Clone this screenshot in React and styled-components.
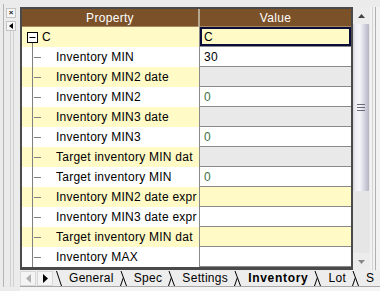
import React from 'react';
import styled, { createGlobalStyle } from 'styled-components';

const GlobalStyle = createGlobalStyle`
  html, body { margin: 0; padding: 0; background: #ebebeb; }
  body { font-family: "Liberation Sans", Arial, sans-serif; }
`;

const Window = styled.div`
  width: 380px;
  height: 291px;
  background: #ebebeb;
  display: flex;
  overflow: hidden;
`;

const LeftStrip = styled.div`
  width: 20px;
  flex: none;
  display: flex;
  flex-direction: column;
  align-items: flex-start;
  padding: 8px 0 0 6px;
  box-sizing: border-box;
  gap: 3px;
  background:
    linear-gradient(#b4b4b4, #b4b4b4) 3px 4px / 1px 283px no-repeat,
    linear-gradient(#d0d0d0, #d0d0d0) 10px 30px / 1px 257px no-repeat,
    linear-gradient(#d0d0d0, #d0d0d0) 13px 30px / 1px 257px no-repeat,
    #ebebeb;
`;

const MiniButton = styled.div`
  width: 8px;
  height: 8px;
  background: #f6f6f6;
  border: 1px solid #c4c4c4;
  display: flex;
  align-items: center;
  justify-content: center;
  font-size: 8px;
  line-height: 1;
  font-weight: bold;
  color: #222;
`;

const Main = styled.div`
  flex: 1;
  display: flex;
  flex-direction: column;
  padding-top: 7px;
`;

const Body = styled.div`
  display: flex;
  height: 263px;
`;

const Grid = styled.div`
  width: 333px;
  box-sizing: border-box;
  border-style: solid;
  border-color: #4a4a4a;
  border-width: 2px 2px 3px 2px;
  background: #fff;
  display: flex;
  flex-direction: column;
`;

const HeaderRow = styled.div`
  display: flex;
  height: 18px;
  background: #7b5129;
  color: #fff;
  font-size: 12px;
  letter-spacing: 0.3px;
  box-shadow: inset 0 -1px 0 #a88860;
`;

const HeaderCell = styled.div`
  width: ${p => p.$w}px;
  flex: none;
  display: flex;
  align-items: center;
  justify-content: center;
  box-sizing: border-box;
  border-right: ${p => (p.$last ? 'none' : '2px solid #b8a890')};
`;

const Row = styled.div`
  display: flex;
  height: 20px;
  box-sizing: border-box;
  border-bottom: 1px solid #8a8a8a;
`;

const PropCell = styled.div`
  width: 178px;
  flex: none;
  display: flex;
  align-items: center;
  box-sizing: border-box;
  border-right: 1px solid #8a8a8a;
  background: ${p => (p.$yellow ? '#fffac6' : '#ffffff')};
  font-size: 12px;
  letter-spacing: 0.25px;
  color: #000;
  white-space: nowrap;
  overflow: hidden;
  margin-bottom: -1px;
`;

const Tree = styled.svg`
  flex: none;
  align-self: stretch;
  height: 20px;
`;

const ValueCell = styled.div`
  width: 151px;
  flex: none;
  display: flex;
  align-items: center;
  box-sizing: border-box;
  padding-left: 4px;
  font-size: 12px;
  letter-spacing: 0.25px;
  color: ${p => (p.$green ? '#3c7040' : '#000')};
  background: ${p =>
    p.$bg === 'yellow' ? '#fffac6' : p.$bg === 'gray' ? '#e9e9e9' : '#ffffff'};
  box-shadow: ${p => (p.$selected ? 'inset 0 0 0 2px #0c0c3a' : 'none')};
`;

const Scrollbar = styled.div`
  width: 17px;
  flex: none;
  display: flex;
  flex-direction: column;
  background: #e6e6e6;
`;

const ScrollButton = styled.div`
  height: 17px;
  flex: none;
  display: flex;
  align-items: center;
  justify-content: center;
  background: #ececec;
`;

const Thumb = styled.div`
  height: 167px;
  flex: none;
  margin: 0 1px 0 0;
  border-radius: 1px;
  background: linear-gradient(to right, #d4d4d8 0%, #ececf2 15%, #f6f6fa 40%, #d6d6e2 70%, #b4b4c4 100%);
  display: flex;
  align-items: center;
  justify-content: center;
`;

const Track = styled.div`
  flex: 1;
  background: #e6e6e6;
`;

const RightEdge = styled.div`
  flex: 1;
  background:
    linear-gradient(#d4d4d4, #d4d4d4) 2px 0 / 1px 100% no-repeat,
    linear-gradient(#b0b0b0, #b0b0b0) 5px 0 / 1px 100% no-repeat,
    #f2f2f2;
`;

const TabBar = styled.div`
  height: 17px;
  display: flex;
  align-items: center;
  background: #ededed;
  font-size: 12px;
  white-space: nowrap;
  overflow: hidden;
`;

const ArrowButton = styled.div`
  width: 16px;
  height: 15px;
  flex: none;
  margin-right: 1px;
  display: flex;
  align-items: center;
  justify-content: center;
  background: #f4f4f4;
  box-shadow: inset 0 0 0 1px #d8d8d8;
`;

const Tab = styled.div`
  flex: none;
  padding: 0 5px;
  font-weight: ${p => (p.$active ? 'bold' : 'normal')};
  letter-spacing: ${p => (p.$active ? '0.7px' : '0.3px')};
  color: #000;
  line-height: 17px;
`;

const Sep = styled.svg`
  flex: none;
`;

const Footer = styled.div`
  height: 4px;
  border-top: 1px solid #a8a8a8;
  background: #f4f4f4;
`;

const rows = [
  { label: 'C', value: 'C', root: true, y: true, v: 'yellow', selected: true },
  { label: 'Inventory MIN', value: '30', y: false, v: 'white' },
  { label: 'Inventory MIN2 date', y: true, v: 'gray' },
  { label: 'Inventory MIN2', value: '0', green: true, y: false, v: 'white' },
  { label: 'Inventory MIN3 date', y: true, v: 'gray' },
  { label: 'Inventory MIN3', value: '0', green: true, y: false, v: 'white' },
  { label: 'Target inventory MIN dat', y: true, v: 'gray' },
  { label: 'Target inventory MIN', value: '0', green: true, y: false, v: 'white' },
  { label: 'Inventory MIN2 date expr', y: true, v: 'yellow' },
  { label: 'Inventory MIN3 date expr', y: false, v: 'white' },
  { label: 'Target inventory MIN dat', y: true, v: 'yellow' },
  { label: 'Inventory MAX', y: false, v: 'white' },
];

const tabs = ['General', 'Spec', 'Settings', 'Inventory', 'Lot', 'S'];

function TreeLines({ root }) {
  if (root) {
    return (
      <Tree width="20" height="20" viewBox="0 0 20 20">
        <rect x="5.5" y="5.5" width="10" height="10" fill="#fff" stroke="#000" />
        <line x1="7.5" y1="10.5" x2="13.5" y2="10.5" stroke="#000" />
        <line x1="10.5" y1="16" x2="10.5" y2="20" stroke="#808080" />
      </Tree>
    );
  }
  return (
    <Tree width="34" height="20" viewBox="0 0 34 20">
      <line x1="10.5" y1="0" x2="10.5" y2="20" stroke="#808080" />
      <line x1="12" y1="10.5" x2="19" y2="10.5" stroke="#808080" />
    </Tree>
  );
}

function TabSep({ first }) {
  return (
    <Sep width="10" height="17" viewBox="0 0 10 17">
      {first ? (
        <path d="M2.5 1 L7.5 16" stroke="#000" fill="none" />
      ) : (
        <path d="M2 1 L7.5 16 M1.5 16 L4.2 8" stroke="#000" fill="none" />
      )}
    </Sep>
  );
}

export default function App() {
  return (
    <>
      <GlobalStyle />
      <Window>
        <LeftStrip>
          <MiniButton>×</MiniButton>
          <MiniButton>
            <svg width="4" height="6" viewBox="0 0 4 6"><path d="M4 0 L0 3 L4 6Z" fill="#000" /></svg>
          </MiniButton>
        </LeftStrip>
        <Main>
          <Body>
            <Grid>
              <HeaderRow>
                <HeaderCell $w={178}>Property</HeaderCell>
                <HeaderCell $w={151} $last>Value</HeaderCell>
              </HeaderRow>
              {rows.map((r, i) => (
                <Row key={i}>
                  <PropCell $yellow={r.y}>
                    <TreeLines root={r.root} />
                    {r.label}
                  </PropCell>
                  <ValueCell $bg={r.v} $green={r.green} $selected={r.selected}>
                    {r.value || ''}
                  </ValueCell>
                </Row>
              ))}
            </Grid>
            <Scrollbar>
              <ScrollButton>
                <svg width="7" height="4" viewBox="0 0 7 4"><path d="M0 4 L3.5 0 L7 4Z" fill="#444" /></svg>
              </ScrollButton>
              <Thumb>
                <svg width="8" height="7" viewBox="0 0 8 7">
                  <path d="M0 0.5H8M0 3.5H8M0 6.5H8" stroke="#6a6a7a" />
                </svg>
              </Thumb>
              <Track />
              <ScrollButton>
                <svg width="7" height="4" viewBox="0 0 7 4"><path d="M0 0 L3.5 4 L7 0Z" fill="#888" /></svg>
              </ScrollButton>
            </Scrollbar>
            <RightEdge />
          </Body>
          <TabBar>
            <ArrowButton>
              <svg width="5" height="9" viewBox="0 0 5 9"><path d="M5 0 L0 4.5 L5 9Z" fill="#b0b0b0" /></svg>
            </ArrowButton>
            <ArrowButton>
              <svg width="5" height="9" viewBox="0 0 5 9"><path d="M0 0 L5 4.5 L0 9Z" fill="#000" /></svg>
            </ArrowButton>
            <TabSep first />
            {tabs.map((t, i) => (
              <React.Fragment key={t}>
                {i > 0 && <TabSep />}
                <Tab $active={t === 'Inventory'}>{t}</Tab>
              </React.Fragment>
            ))}
          </TabBar>
          <Footer />
        </Main>
      </Window>
    </>
  );
}
